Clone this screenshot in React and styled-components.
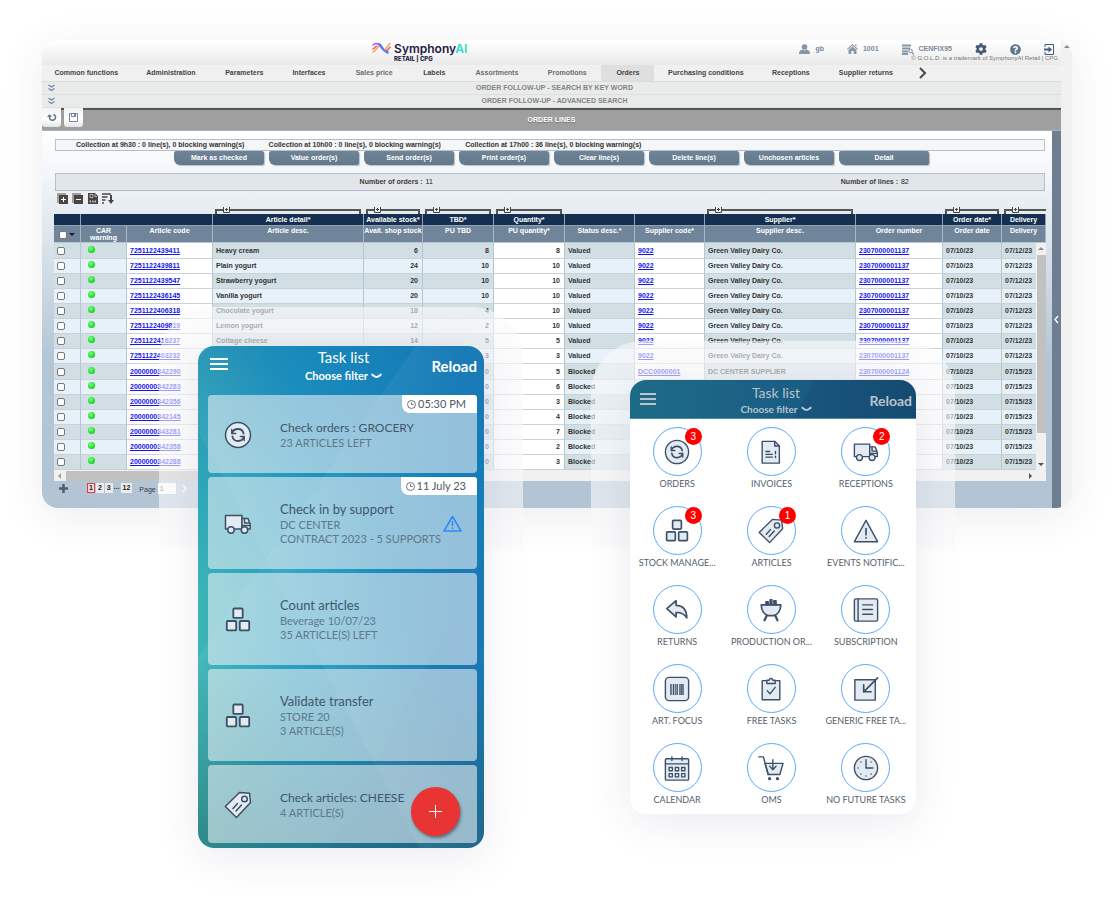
import React from 'react';
import styled, { createGlobalStyle, css } from 'styled-components';
import { FaCog, FaQuestionCircle } from 'react-icons/fa';

const GlobalStyle = createGlobalStyle`
    * {
        box-sizing: border-box;
    }
    body {
        margin: 0;
        background: #fff;
        font-family: "Liberation Sans", Arial, sans-serif;
    }
    button, input {
        font-family: inherit;
        margin: 0;
    }
`;

const Page = styled.main`
    position: relative;
    min-height: 100vh;
    padding: 40px 42px 0;
    overflow: hidden;
`;

/* ---------- back office window ---------- */

const Desktop = styled.section`
    display: flex;
    border-radius: 16px;
    overflow: hidden;
    background: #f1f1f1;
    box-shadow: 0 8px 44px rgba(50, 50, 80, 0.09);
    font-size: 7px;
    font-weight: 700;
    line-height: 8px;
    color: #3b3b3b;
`;

const Screen = styled.div`
    flex: 1;
    min-width: 0;
`;

const PageScroll = styled.div`
    flex: none;
    width: 11px;
    padding-top: 5px;
    display: flex;
    justify-content: center;
`;

const Arrow = styled.span`
    width: 0;
    height: 0;
    border: 3px solid transparent;
    ${props => props.dir === 'up' && css`border-top: 0; border-bottom-color: #8a8a8a;`}
    ${props => props.dir === 'down' && css`border-bottom: 0; border-top-color: #505050;`}
    ${props => props.dir === 'left' && css`border-left: 0; border-right-color: #a0a0a0;`}
    ${props => props.dir === 'right' && css`border-right: 0; border-left-color: #505050;`}
`;

const TopBar = styled.header`
    display: flex;
    justify-content: space-between;
    height: 25px;
    padding-left: 32%;
    background: linear-gradient(#fff 10%, #e9e9e9);
`;

const Brand = styled.div`
    display: flex;
    gap: 3px;
    padding-top: 2px;
    margin-left: 4px;
`;

const BrandName = styled.div`
    font-family: Inter, sans-serif;
    font-size: 12px;
    font-weight: 600;
    line-height: 13px;
    color: #231942;
    span {
        color: #2fdcc8;
    }
`;

const BrandLine = styled.div`
    font-family: Inter, sans-serif;
    font-size: 6px;
    font-weight: 800;
    line-height: 8px;
    color: #231942;
`;

const Account = styled.div`
    padding: 3px 3px 0 0;
    color: #7a8a9a;
`;

const AccountRow = styled.div`
    display: flex;
    align-items: center;
    justify-content: flex-end;
    gap: 23px;
    height: 12px;
    padding-right: 4px;
`;

const AccountItem = styled.span`
    display: flex;
    align-items: center;
    gap: 5px;
    svg {
        color: #8496a8;
    }
`;

const IconButton = styled.button`
    display: flex;
    align-items: center;
    justify-content: center;
    padding: 0;
    border: 0;
    background: none;
    color: ${props => props.tone || '#445a77'};
    cursor: pointer;
`;

const Copyright = styled.div`
    font-size: 6px;
    font-weight: 400;
    line-height: 7px;
    color: #777;
    text-align: right;
`;

const Menu = styled.nav`
    display: flex;
    height: 17px;
    background: #f0f0f0;
    border-bottom: 1px solid #dcdcdc;
`;

const MenuLink = styled.a`
    display: flex;
    align-items: center;
    justify-content: center;
    flex: 0 0 ${props => props.share}%;
    white-space: nowrap;
    text-decoration: none;
    color: ${props => (props.soft ? '#6d6d6d' : '#454545')};
    background: ${props => (props.active ? '#dfdfdf' : 'none')};
`;

const FoldRow = styled.div`
    display: grid;
    grid-template-columns: 1fr auto 1fr;
    align-items: center;
    height: 13px;
    padding-left: 6px;
    background: #e9ebea;
    border-bottom: 1px solid #dde0e0;
    color: #858585;
`;

const TitleBar = styled.div`
    display: grid;
    grid-template-columns: 1fr auto 1fr;
    height: 23px;
    background: #9f9f9f;
    border-top: 2px solid #555;
    border-bottom: 1px solid #a7b4bf;
    color: #fff;
`;

const TabButtons = styled.div`
    display: flex;
    gap: 3px;
    margin-top: -2px;
`;

const TabButton = styled.button`
    display: flex;
    align-items: center;
    justify-content: center;
    width: 19px;
    height: 19px;
    padding: 0;
    border: 0;
    border-radius: 0 0 3px 3px;
    background: linear-gradient(#f3f3f3, #fff 60%, #e3e3e3);
`;

const ScreenTitle = styled.h1`
    margin: 0;
    padding-top: 6px;
    font-size: 7px;
    line-height: 8px;
    text-shadow: 0 1px 1px #777;
`;

const Body = styled.div`
    display: flex;
    align-items: stretch;
`;

const Work = styled.div`
    flex: 1;
    min-width: 0;
    padding: 8px 6px 0 12px;
    background: linear-gradient(#fff, #f2f5f9 12%, #b4c6d5 60%, #b3c5d5);
`;

const SideHandle = styled.button`
    flex: none;
    width: 9px;
    padding: 0;
    border: 0;
    background: #6d7e90;
`;

const Collections = styled.div`
    display: grid;
    grid-template-columns: 193fr 197fr 580fr;
    margin: 0 1px;
    padding: 1px 0 1px 20px;
    border: 1px solid #b3c0cb;
    background: #f5f6f8;
    white-space: nowrap;
    color: #333;
`;

const Actions = styled.div`
    display: flex;
    gap: 5px;
    margin: 0 117px 0 120px;
`;

const ActionButton = styled.button`
    flex: 1;
    height: 14px;
    padding: 0;
    border: 0;
    border-radius: 2px 2px 2px 6px;
    background: linear-gradient(#6f8497, #62788c);
    box-shadow: 1px 1px 1px #b9bfc6;
    color: #fff;
    font-size: 7px;
    font-weight: 700;
    line-height: 8px;
`;

const Totals = styled.div`
    display: grid;
    grid-template-columns: 1fr 1fr;
    margin: 8px 1px 0;
    height: 18px;
    align-items: center;
    border: 1px solid #b3c0cb;
    background: #e2e6eb;
    padding-left: 30%;
`;

const Total = styled.span`
    padding-left: ${props => props.inset}px;
    b {
        font-weight: 400;
        margin-left: 1px;
        color: #222;
    }
`;

const Tools = styled.div`
    display: flex;
    gap: 3px;
    padding: 2px 0 2px 3px;
`;

const GridBox = styled.div`
    position: relative;
`;

const Grid = styled.table`
    width: 100%;
    table-layout: fixed;
    border-collapse: separate;
    border-spacing: 0;
`;

const BracketCell = styled.th`
    height: 7px;
    padding: 0 3px 0 2px;
    overflow: hidden;
`;

const Bracket = styled.div`
    height: 5px;
    border: solid #555;
    border-width: 2px 2px 0 2px;
    margin: 2px ${props => (props.open ? -6 : 0)}px 0 0;
    svg {
        display: block;
        margin: -5px 0 0 6px;
    }
`;

const GroupCell = styled.th`
    height: 12px;
    padding: 0;
    background: #152f50;
    border-right: 1px solid #93a3b5;
    border-bottom: 1px solid #93a3b5;
    color: #fff;
    white-space: nowrap;
`;

const HeadCell = styled.th`
    height: 17px;
    padding: 1px 0 0;
    vertical-align: top;
    background: #70859a;
    border-right: 1px solid #a9b7c5;
    border-bottom: 1px solid #b9c5d0;
    color: #fff;
    line-height: 7px;
    white-space: pre;
    overflow: hidden;
`;

const Row = styled.tr`
    height: 15px;
    background: #e7f1f9;
    &:nth-child(odd) {
        background: #d1dfe5;
    }
    &:first-child, &:nth-child(9) {
        height: 16px;
    }
`;

const Cell = styled.td`
    padding: 0 4px 0 3px;
    border-right: 1px solid #b4c5d4;
    border-bottom: 1px solid #cbd1d7;
    text-align: ${props => (props.right ? 'right' : 'left')};
    white-space: nowrap;
    color: #333;
    background: ${props => (props.entry ? '#fff' : 'none')};
`;

const CellLink = styled.a`
    color: #1414ee;
`;

const Tick = styled.input`
    appearance: none;
    display: block;
    width: 8px;
    height: 8px;
    border: 1px solid #777;
    border-radius: 2px;
    background: #fff;
`;

const HeadTick = styled.div`
    display: flex;
    align-items: center;
    gap: 2px;
    padding: 4px 0 0 5px;
`;

const Lamp = styled.span`
    display: block;
    width: 7px;
    height: 7px;
    margin: -3px 0 0 4px;
    border-radius: 50%;
    background: radial-gradient(circle at 40% 35%, #7dff7d, #1fdc2b 60%, #17a81f);
`;

const RowScroll = styled.div`
    position: absolute;
    right: 0;
    top: 36px;
    bottom: 0;
    width: 10px;
    display: flex;
    flex-direction: column;
    align-items: center;
    justify-content: space-between;
    padding: 4px 0;
    background: #f1f1f1;
    &::before {
        content: "";
        position: absolute;
        top: 12px;
        bottom: 37px;
        width: 9px;
        background: #c1c1c1;
    }
`;

const ColumnScroll = styled.div`
    display: flex;
    align-items: center;
    justify-content: space-between;
    height: 11px;
    padding: 0 14px 0 4px;
    background: #f1f1f1;
`;

const Thumb = styled.div`
    width: 40%;
    height: 10px;
    margin: 0 auto 0 5px;
    background: #c1c1c1;
`;

const Pager = styled.footer`
    display: flex;
    align-items: flex-start;
    height: 27px;
    padding: 2px 0 0 5px;
    svg {
        margin-top: 1px;
    }
`;

const PageNumbers = styled.div`
    display: flex;
    gap: 1px;
    margin: 0 7px 0 19px;
`;

const PageButton = styled.button`
    height: 10px;
    padding: 0 1px;
    border: 1px solid ${props => (props.current ? '#e23b43' : '#ececec')};
    background: ${props => (props.current ? '#f8d7d9' : '#ececec')};
    font-size: 7px;
    line-height: 8px;
    font-weight: 700;
    color: #222;
`;

const PageField = styled.label`
    display: flex;
    align-items: flex-start;
    gap: 2px;
    font-weight: 400;
    line-height: 14px;
    input {
        width: 18px;
        height: 11px;
        padding: 0 2px;
        border: 0;
        background: #fff;
        font-size: 7px;
        color: #333;
    }
`;

/* ---------- phones ---------- */

const PhoneSlot = styled.div`
    position: absolute;
    left: ${props => props.x}px;
    top: ${props => props.y}px;
    width: 286px;
    font-family: Lato, sans-serif;
    &::before {
        content: "";
        position: absolute;
        left: -39px;
        right: -39px;
        top: -39px;
        height: ${props => props.halo}px;
        border-radius: 52px 52px 0 0;
        background: rgba(250, 250, 252, 0.6);
    }
`;

const Phone = styled.section`
    position: relative;
    border-radius: 16px;
    overflow: hidden;
    box-shadow: 0 8px 44px rgba(60, 60, 110, 0.1);
    background: #fff;
`;

const TaskPhone = styled(Phone)`
    padding: 0 7px 5px 10px;
    background:
        linear-gradient(118deg, transparent 72%, rgba(10, 60, 130, 0.06) 72.2%, transparent 90%),
        linear-gradient(62deg, transparent 40%, rgba(255, 255, 255, 0.06) 40.2%, transparent 60%),
        linear-gradient(125deg, transparent 34%, rgba(255, 255, 255, 0.05) 34.2%, transparent 55%),
        linear-gradient(rgba(14, 115, 180, 0.5), rgba(10, 130, 190, 0.25) 30%, transparent 50%, transparent 62%, rgba(30, 70, 70, 0.4)),
        linear-gradient(to right, #3cb5b6, #249fc2 35%, #1a7bb6 90%);
`;

const PhoneHead = styled.header`
    display: grid;
    grid-template-columns: 1fr auto 1fr;
    align-items: center;
    color: ${props => (props.dim ? '#b9c3cd' : '#fff')};
    height: ${props => (props.dim ? 39 : 49)}px;
    ${props => props.dim ? css`
        padding: 3px 4px 0 10px;
        background:
            linear-gradient(120deg, transparent 60%, rgba(10, 40, 90, 0.12) 60.5%),
            linear-gradient(to right, #1d6b87, #1b5f85 50%, #174f76);
        border-bottom: 1px solid #4f8ba0;
    ` : css`
        padding: 0 0 9px 2px;
    `}
`;

const Burger = styled.button`
    display: block;
    width: ${props => (props.small ? 16 : 18)}px;
    height: 12px;
    padding: 0;
    border: 0;
    margin-top: -4px;
    background: linear-gradient(currentColor 2px, transparent 2px 5px, currentColor 5px 7px, transparent 7px 10px, currentColor 10px);
    color: inherit;
`;

const HeadTitle = styled.h2`
    margin: 0;
    font-size: ${props => (props.small ? 14 : 15)}px;
    font-weight: 400;
    line-height: ${props => (props.small ? 17 : 19)}px;
    text-align: center;
`;

const Filter = styled.button`
    display: flex;
    align-items: center;
    gap: 3px;
    padding: 0;
    border: 0;
    background: none;
    color: inherit;
    font-size: ${props => (props.small ? 10 : 11)}px;
    font-weight: 700;
    line-height: 17px;
`;

const Reload = styled.button`
    justify-self: end;
    padding: 0;
    border: 0;
    background: none;
    color: inherit;
    font-size: ${props => (props.small ? 14 : 15)}px;
    font-weight: 700;
`;

const Tasks = styled.div`
    display: grid;
    gap: 4px;
`;

const Task = styled.article`
    position: relative;
    display: grid;
    grid-template-columns: 56px 1fr auto;
    align-items: center;
    height: ${props => (props.tall ? 92 : 78)}px;
    padding: 1px 15px 0 16px;
    border-radius: 4px;
    background: rgba(232, 238, 243, 0.6);
    color: #61788a;
    font-size: 11px;
    line-height: 14px;
    h3 {
        margin: 0;
        color: #41566d;
        font-size: ${props => (props.compact ? 12 : 13)}px;
        font-weight: 400;
        line-height: 17px;
    }
    p {
        margin: 0;
        white-space: nowrap;
    }
`;

const Due = styled.span`
    position: absolute;
    top: 0;
    right: 0;
    display: flex;
    align-items: center;
    gap: 2px;
    height: 18px;
    padding: 0 11px 0 5px;
    border-radius: 0 3px 0 8px;
    background: #fff;
    color: #4c5866;
    font-size: 11px;
`;

const AddButton = styled.button`
    position: absolute;
    right: 24px;
    bottom: 12px;
    display: flex;
    align-items: center;
    justify-content: center;
    width: 49px;
    height: 49px;
    border: 0;
    border-radius: 50%;
    background: #e93434;
    box-shadow: 1px 2px 3px rgba(30, 40, 60, 0.5);
`;

const Apps = styled.div`
    display: grid;
    grid-template-columns: repeat(3, 1fr);
    gap: 14px 0;
    padding: 8px 3px 6px 0;
`;

const AppLink = styled.a`
    display: flex;
    flex-direction: column;
    align-items: center;
    text-decoration: none;
    color: #55606c;
    font-size: 9px;
    line-height: 16px;
    white-space: nowrap;
`;

const Disc = styled.span`
    position: relative;
    display: flex;
    align-items: center;
    justify-content: center;
    width: 49px;
    height: 49px;
    border: 1px solid #5ba8fb;
    border-radius: 50%;
`;

const Badge = styled.span`
    position: absolute;
    top: 0;
    right: -1px;
    width: 17px;
    height: 17px;
    border-radius: 50%;
    background: #f00;
    color: #fff;
    font-family: "Liberation Sans", Arial, sans-serif;
    font-size: 10px;
    line-height: 17px;
    text-align: center;
`;

const Glyph = styled.svg.attrs({ viewBox: '0 0 28 28' })`
    width: ${props => props.width || 26}px;
    height: ${props => props.width || 26}px;
    fill: #e3eaf1;
    stroke: #3c5068;
    stroke-width: 1.5;
    stroke-linejoin: round;
    stroke-linecap: round;
`;

const glyphs = {
    orders: (
        <>
            <circle cx="14" cy="14" r="12.500" />
            <path fill="none" strokeWidth="1.800" d="M8.200 12.200C8.800 9.600 11 8 14 8c2.800 0 5 1.600 5.600 4.600M19.800 15.800C19.200 18.400 17 20 14 20c-2.800 0-5-1.600-5.600-4.600" />
            <path fill="none" d="M7.800 8.500v3.900h3.900M20.200 19.500v-3.900h-3.900" />
        </>
    ),
    truck: (
        <>
            <path d="M1.500 5.500h16.500v13.500H1.500z" />
            <path d="M18 8.500h6l2.200 6V19H18z" />
            <path fill="none" d="M20.500 8.500v4.500h5M18 15.500h8" />
            <circle cx="7" cy="20" r="3.200" />
            <circle cx="20.500" cy="20" r="3.200" />
        </>
    ),
    boxes: (
        <>
            <rect x="9.300" y="2.500" width="9.400" height="9.400" rx="1" strokeWidth="1.800" />
            <rect x="2.800" y="15" width="9.400" height="9.400" rx="1" strokeWidth="1.800" />
            <rect x="15.800" y="15" width="9.400" height="9.400" rx="1" strokeWidth="1.800" />
        </>
    ),
    tag: (
        <>
            <path d="M15.500 1.500l10 .8 1 9.200L12.500 26.500 1.300 15.500z" />
            <circle cx="20.500" cy="8" r="2.800" />
            <path fill="none" d="M9 17.500l4.500-5M12 20l5.500-6" />
        </>
    ),
    invoice: (
        <>
            <path d="M4.500 2.500h13.500l5 5v18.500h-18.500z" />
            <path fill="none" d="M18 2.500v5h5M8.500 13.500h4M8.500 16.500h7M8.500 19.500h7M18.800 13.500v2.500M18.800 18.500v1.500" />
        </>
    ),
    alert: (
        <>
            <path d="M14 2.500l12.500 23h-25z" />
            <path fill="none" strokeWidth="1.800" d="M14 11.500v6.500M14 21.200v.3" />
        </>
    ),
    back: (
        <path strokeWidth="1.800" d="M3 12.500l10-8.500v5c6.500.2 11.500 4 11.500 13.500-2.800-4.500-6-6-11.500-5.800V21.500z" />
    ),
    grill: (
        <>
            <path strokeWidth="1.800" d="M3.500 8.500h21c0 6-3.500 11-7.500 11.500h-6C7 19.500 3.500 14.500 3.500 8.500z" />
            <path fill="#3c5068" d="M8.500 5v3.500h2.500V5zM13 3v5.500h2V3zM17 4v4.500h2.500V4z" />
            <path fill="none" strokeWidth="2.400" d="M9.500 20L7 25M18.500 20l2.500 5" />
        </>
    ),
    book: (
        <>
            <rect x="1.500" y="2" width="25" height="24" rx="1.500" />
            <path fill="none" d="M5.500 2v24M10.500 8.500h10.500M10.500 13.500h10.500M10.500 18.500h10.500" />
        </>
    ),
    barcode: (
        <>
            <rect x="1.500" y="1.500" width="25" height="25" rx="4" />
            <path fill="none" strokeLinecap="butt" d="M7.500 8.500v12M10.200 8.500v12M14.200 8.500v12M17.200 8.500v12M20.500 8.500v12" />
            <path fill="none" strokeWidth="1" strokeLinecap="butt" d="M12.200 8.500v12M18.900 8.500v12" />
        </>
    ),
    clipboard: (
        <>
            <path d="M4.500 5h19v20.500h-19z" />
            <path d="M9.500 8V4.500h2.500c.5-2.500 3.500-2.500 4 0h2.500V8z" />
            <path fill="none" d="M10 16l3 3.200 5.500-7" />
        </>
    ),
    inbox: (
        <>
            <path d="M2 4h22v22H2z" />
            <path fill="none" strokeWidth="1.800" d="M26.500 2L11.500 17M11.500 9.500V17h8" />
        </>
    ),
    calendar: (
        <>
            <rect x="1.500" y="4" width="25" height="23" rx="1" />
            <path fill="none" d="M1.500 9.500h25M8.500 2v4M19.500 2v4" />
            <path fill="#fff" d="M5.500 13.500h3.500v3.500H5.500zM12.200 13.500h3.500v3.500h-3.500zM19 13.500h3.500v3.500H19zM5.500 20h3.500v3.500H5.500zM12.200 20h3.500v3.500h-3.500zM19 20h3.500v3.500H19z" />
        </>
    ),
    cart: (
        <>
            <path d="M7.500 9h19.500l-3.500 12H11z" />
            <path fill="none" d="M.8 2h5L11 21M16 5v10.500M12.500 12l3.500 3.800 3.500-3.800" />
            <circle cx="12.500" cy="25.500" r="1" fill="#3c5068" />
            <circle cx="21" cy="25.500" r="1" fill="#3c5068" />
        </>
    ),
    clock: (
        <>
            <circle cx="14" cy="14" r="12.500" />
            <path fill="none" d="M14 5v9h7.500M8.500 7.500v.1M5.500 14h.1M8.500 20.500v.1M14 22.500v.1M19.500 20.500v.1M19.500 7.500v.1" />
        </>
    ),
};

const menu = [
    { name: 'Common functions', share: 8.7 },
    { name: 'Administration', share: 7.9 },
    { name: 'Parameters', share: 6.5 },
    { name: 'Interfaces', share: 6.2 },
    { name: 'Sales price', share: 6.6, soft: true },
    { name: 'Labels', share: 5.2 },
    { name: 'Assortments', share: 7.1, soft: true },
    { name: 'Promotions', share: 6.7, soft: true },
    { name: 'Orders', share: 5.2, active: true },
    { name: 'Purchasing conditions', share: 10.1 },
    { name: 'Receptions', share: 6.6 },
    { name: 'Supplier returns', share: 8.1 },
];

const actions = ['Mark as checked', 'Value order(s)', 'Send order(s)', 'Print order(s)', 'Clear line(s)', 'Delete line(s)', 'Unchosen articles', 'Detail'];

const columns = [
    { width: 27 },
    { width: 46, head: 'CAR\nwarning' },
    { width: 86, head: 'Article code' },
    { width: 151, group: 'Article detail*', head: 'Article desc.' },
    { width: 59, group: 'Available stock*', head: 'Avail. shop stock' },
    { width: 71, group: 'TBD*', head: 'PU TBD' },
    { width: 71, group: 'Quantity*', head: 'PU quantity*' },
    { width: 70, head: 'Status desc.*' },
    { width: 70, head: 'Supplier code*' },
    { width: 151, group: 'Supplier*', head: 'Supplier desc.' },
    { width: 87, head: 'Order number' },
    { width: 59, group: 'Order date*', head: 'Order date' },
    { width: 44, group: 'Delivery', head: 'Delivery' },
];

const dairy = ['9022', 'Green Valley Dairy Co.', '2307000001137'];

const lines = [
    ['7251122439411', 'Heavy cream', 6, 8, 8, ...dairy],
    ['7251122439811', 'Plain yogurt', 24, 10, 10, ...dairy],
    ['7251122439547', 'Strawberry yogurt', 20, 10, 10, ...dairy],
    ['7251122436145', 'Vanilla yogurt', 20, 10, 10, ...dairy],
    ['7251122406318', 'Chocolate yogurt', 18, 4, 10, ...dairy],
    ['7251122409819', 'Lemon yogurt', 12, 2, 10, ...dairy],
    ['7251122416237', 'Cottage cheese', 14, 5, 5, ...dairy],
    ['7251122403232', '', '', 3, 3, ...dairy],
    ['2000000342290', '', '', 0, 5, 'DCC0000001', 'DC CENTER SUPPLIER', '2307000001124'],
    ['2000000342283', '', '', 0, 6],
    ['2000000342356', '', '', 0, 3],
    ['2000000342145', '', '', 0, 4],
    ['2000000343281', '', '', 0, 7],
    ['2000000342358', '', '', 0, 2],
    ['2000000342288', '', '', 0, 3],
];

const tasks = [
    { icon: 'orders', title: 'Check orders : GROCERY', info: ['23 ARTICLES LEFT'], due: '05:30 PM' },
    { icon: 'truck', title: 'Check in by support', info: ['DC CENTER', 'CONTRACT 2023 - 5 SUPPORTS'], due: '11 July 23', warning: true },
    { icon: 'boxes', title: 'Count articles', info: ['Beverage 10/07/23', '35 ARTICLE(S) LEFT'] },
    { icon: 'boxes', title: 'Validate transfer', info: ['STORE 20', '3 ARTICLE(S)'] },
    { icon: 'tag', title: 'Check articles: CHEESE', info: ['4 ARTICLE(S)'] },
];

const apps = [
    { icon: 'orders', name: 'ORDERS', count: 3 },
    { icon: 'invoice', name: 'INVOICES' },
    { icon: 'truck', name: 'RECEPTIONS', count: 2 },
    { icon: 'boxes', name: 'STOCK MANAGE...', count: 3 },
    { icon: 'tag', name: 'ARTICLES', count: 1 },
    { icon: 'alert', name: 'EVENTS NOTIFIC...' },
    { icon: 'back', name: 'RETURNS' },
    { icon: 'grill', name: 'PRODUCTION OR...' },
    { icon: 'book', name: 'SUBSCRIPTION' },
    { icon: 'barcode', name: 'ART. FOCUS' },
    { icon: 'clipboard', name: 'FREE TASKS' },
    { icon: 'inbox', name: 'GENERIC FREE TA...' },
    { icon: 'calendar', name: 'CALENDAR' },
    { icon: 'cart', name: 'OMS' },
    { icon: 'clock', name: 'NO FUTURE TASKS' },
];

function Logo() {
    return (
        <svg width="19" height="12" viewBox="0 0 19 12" fill="none" strokeWidth="1.500" strokeLinecap="round">
            <path stroke="#f9a13a" d="M1 10C3.500 9 4.500 6.500 6.500 4.500M12.500 8c2-1.500 3-4.500 5.500-6.500" />
            <path stroke="#f25f7a" d="M1 7c1.500-.5 2.500-2 3.500-3M14.500 8.500c1.500-.5 2.500-2 3.500-3.500" />
            <path stroke="#8b5cf6" d="M1 3C4 .5 6 1.500 8 4s4 6.500 8 5.500" />
            <path stroke="#4285f4" d="M6.500 1.500c4 .5 4.500 8.500 9.500 9.500" />
        </svg>
    );
}

function DoubleChevron() {
    return (
        <svg width="7" height="8" viewBox="0 0 7 8" fill="none" stroke="#7288a0" strokeWidth="1.300">
            <path d="M.5 1l3 2 3-2M.5 4.500l3 2 3-2" />
        </svg>
    );
}

function FilterChevron() {
    return (
        <svg width="11" height="6" viewBox="0 0 11 6" fill="none" stroke="currentColor" strokeWidth="2.200">
            <path d="M.5 1.500c1.500 0 2.500 2.500 5 2.500s3.500-2.500 5-2.500" />
        </svg>
    );
}

function ToolIcons() {
    return (
        <Tools>
            <IconButton aria-label="Add lines" tone="#4a4444">
                <svg width="12" height="12" viewBox="0 0 12 12">
                    <path d="M0 0h9v2H2v8H0z" fill="#a59f9d" />
                    <path d="M2 2h9v9H2z" fill="currentColor" />
                    <path d="M6.500 4v5M4 6.500h5" stroke="#fff" />
                </svg>
            </IconButton>
            <IconButton aria-label="Remove lines" tone="#4a4444">
                <svg width="12" height="12" viewBox="0 0 12 12">
                    <path d="M0 0h9v2H2v8H0z" fill="#a59f9d" />
                    <path d="M2 2h9v9H2z" fill="currentColor" />
                    <path d="M4 6.500h5" stroke="#fff" />
                </svg>
            </IconButton>
            <IconButton aria-label="Export" tone="#4a4444">
                <svg width="12" height="12" viewBox="0 0 12 12">
                    <path d="M1 0h7l3 3v8H1z" fill="currentColor" />
                    <path d="M3 1.500h3v3H3zM8 1v2.500h2" stroke="#ccc" strokeWidth=".8" fill="none" />
                    <path d="M2.500 8.500h7" stroke="#bbb" strokeWidth="2" strokeDasharray="1.500 1" />
                </svg>
            </IconButton>
            <IconButton aria-label="Sort" tone="#4a4444">
                <svg width="12" height="12" viewBox="0 0 12 12" fill="none" stroke="currentColor" strokeWidth="1.500">
                    <path d="M0 1h9M0 4h5.500M0 7h3.500M0 10h2" />
                    <path d="M9 2v7" strokeWidth="2" />
                    <path d="M6 7h6L9 11z" fill="currentColor" stroke="none" />
                </svg>
            </IconButton>
        </Tools>
    );
}

function OrderGrid() {
    return (
        <GridBox>
            <Grid>
                <colgroup>
                    {columns.map((col, i) => <col key={i} style={{ width: `${col.width / 9.92}%` }} />)}
                </colgroup>
                <thead>
                    <tr>
                        {columns.map((col, i) => (
                            <BracketCell key={i}>
                                {col.group && (
                                    <Bracket open={i === columns.length - 1 ? 1 : 0}>
                                        <svg width="7" height="7" viewBox="0 0 7 7" fill="#eee" stroke="#444">
                                            <path d="M.5 .5h6v6h-6zM3.500 2v3M2 3.500h3" />
                                        </svg>
                                    </Bracket>
                                )}
                            </BracketCell>
                        ))}
                    </tr>
                    <tr>
                        {columns.map((col, i) => i !== 1 && (
                            <GroupCell key={i} colSpan={i === 2 ? 2 : 1}>{col.group}</GroupCell>
                        ))}
                    </tr>
                    <tr>
                        {columns.map((col, i) => (
                            <HeadCell key={i}>
                                {i === 0 ? (
                                    <HeadTick>
                                        <Tick type="checkbox" aria-label="Select all lines" />
                                        <svg width="6" height="4" viewBox="0 0 6 4"><path d="M0 0h6L3 3z" fill="#1c1440" /></svg>
                                    </HeadTick>
                                ) : col.head}
                            </HeadCell>
                        ))}
                    </tr>
                </thead>
                <tbody>
                    {lines.map(([code, desc, stock, tbd, qty, supplier, supplierName, order], i) => (
                        <Row key={code}>
                            <Cell><Tick type="checkbox" aria-label={code} /></Cell>
                            <Cell><Lamp /></Cell>
                            <Cell entry={1}><CellLink href="#article">{code}</CellLink></Cell>
                            <Cell>{desc}</Cell>
                            <Cell right={1}>{stock}</Cell>
                            <Cell right={1}>{tbd}</Cell>
                            <Cell right={1} entry={1}>{qty}</Cell>
                            <Cell>{i < 8 ? 'Valued' : 'Blocked'}</Cell>
                            <Cell entry={1}>{supplier && <CellLink href="#supplier">{supplier}</CellLink>}</Cell>
                            <Cell>{supplierName}</Cell>
                            <Cell entry={1}>{order && <CellLink href="#order">{order}</CellLink>}</Cell>
                            <Cell>07/10/23</Cell>
                            <Cell>{i < 8 ? '07/12/23' : '07/15/23'}</Cell>
                        </Row>
                    ))}
                </tbody>
            </Grid>
            <RowScroll>
                <Arrow dir="up" />
                <Arrow dir="down" />
            </RowScroll>
        </GridBox>
    );
}

function BackOffice() {
    return (
        <Desktop>
            <Screen>
                <TopBar>
                    <Brand>
                        <Logo />
                        <div>
                            <BrandName>Symphony<span>AI</span></BrandName>
                            <BrandLine>RETAIL | CPG</BrandLine>
                        </div>
                    </Brand>
                    <Account>
                        <AccountRow>
                            <AccountItem>
                                <svg width="11" height="10" viewBox="0 0 11 10" fill="currentColor">
                                    <circle cx="5.500" cy="3" r="2.800" />
                                    <path d="M0 10c0-3 1.500-4 3.500-4.500l2 1 2-1C9.500 6 11 7 11 10z" />
                                </svg>
                                gb
                            </AccountItem>
                            <AccountItem>
                                <svg width="11" height="10" viewBox="0 0 11 10" fill="currentColor">
                                    <path d="M5.500 0L11 5l-.7.800L5.500 1.600.7 5.800 0 5zM8 .5h1.500v2L8 1.200z" />
                                    <path d="M5.500 2.500l4 3.500v4H6.800V7H4.200v3H1.500V6z" />
                                </svg>
                                1001
                            </AccountItem>
                            <AccountItem>
                                <svg width="12" height="11" viewBox="0 0 12 11" fill="none" stroke="currentColor" strokeWidth="1.800">
                                    <path d="M0 1.500h9M0 4.500h8M0 7.500h6M0 10h6" />
                                    <circle cx="8.500" cy="7" r="1.800" strokeWidth="1" />
                                    <path d="M10 8.500l2 2" strokeWidth="1.300" />
                                </svg>
                                CENFIX95
                            </AccountItem>
                            <IconButton aria-label="Settings"><FaCog size="12" /></IconButton>
                            <IconButton aria-label="Help" tone="#5f7388"><FaQuestionCircle size="11" /></IconButton>
                            <IconButton aria-label="Sign out">
                                <svg width="10" height="11" viewBox="0 0 10 11" fill="none" stroke="currentColor">
                                    <path d="M1 3V.5h8.500v10H1V8" />
                                    <path d="M0 5.500h5" strokeWidth="2" />
                                    <path d="M4.500 2.500l3.500 3-3.500 3z" fill="currentColor" stroke="none" />
                                </svg>
                            </IconButton>
                        </AccountRow>
                        <Copyright>© G.O.L.D. is a trademark of SymphonyAI Retail | CPG</Copyright>
                    </Account>
                </TopBar>
                <Menu>
                    {menu.map(item => (
                        <MenuLink key={item.name} href="#menu" share={item.share} soft={item.soft ? 1 : 0} active={item.active ? 1 : 0}>{item.name}</MenuLink>
                    ))}
                    <IconButton aria-label="More menus" tone="#4a4a4a">
                        <svg width="40" height="12" viewBox="0 0 40 12" fill="none" stroke="currentColor" strokeWidth="2">
                            <path d="M13 1l5 5-5 5" />
                        </svg>
                    </IconButton>
                </Menu>
                <FoldRow><DoubleChevron />ORDER FOLLOW-UP - SEARCH BY KEY WORD</FoldRow>
                <FoldRow><DoubleChevron />ORDER FOLLOW-UP - ADVANCED SEARCH</FoldRow>
                <TitleBar>
                    <TabButtons>
                        <TabButton aria-label="Undo">
                            <svg width="10" height="9" viewBox="0 0 10 9" fill="none" stroke="#64788f" strokeWidth="1.500">
                                <path d="M2.500 2.500v2a3 3 0 1 0 4-3" />
                                <path d="M0 4l2.500-3L5 4z" fill="#64788f" stroke="none" />
                            </svg>
                        </TabButton>
                        <TabButton aria-label="Save">
                            <svg width="9" height="9" viewBox="0 0 9 9" fill="none" stroke="#7288a0">
                                <path d="M.5 .5h8v8h-8zM2.500 .5v3h4v-3M5.500 1v2" />
                            </svg>
                        </TabButton>
                    </TabButtons>
                    <ScreenTitle>ORDER LINES</ScreenTitle>
                </TitleBar>
                <Body>
                    <Work>
                        <Collections>
                            <span>Collection at 9h30 : 0 line(s), 0 blocking warning(s)</span>
                            <span>Collection at 10h00 : 0 line(s), 0 blocking warning(s)</span>
                            <span>Collection at 17h00 : 36 line(s), 0 blocking warning(s)</span>
                        </Collections>
                        <Actions>
                            {actions.map(name => <ActionButton key={name}>{name}</ActionButton>)}
                        </Actions>
                        <Totals>
                            <Total inset={6}>Number of orders : <b>11</b></Total>
                            <Total inset={142}>Number of lines : <b>82</b></Total>
                        </Totals>
                        <ToolIcons />
                        <OrderGrid />
                        <ColumnScroll>
                            <Arrow dir="left" />
                            <Thumb />
                            <Arrow dir="right" />
                        </ColumnScroll>
                        <Pager>
                            <IconButton aria-label="Add line" tone="#4d5f70">
                                <svg width="9" height="9" viewBox="0 0 9 9" stroke="currentColor" strokeWidth="2.500">
                                    <path d="M4.500 0v9M0 4.500h9" />
                                </svg>
                            </IconButton>
                            <PageNumbers>
                                <PageButton current={1}>1</PageButton>
                                <PageButton>2</PageButton>
                                <PageButton>3</PageButton>
                                <span>...</span>
                                <PageButton>12</PageButton>
                            </PageNumbers>
                            <PageField>Page <input defaultValue="1" /></PageField>
                            <IconButton aria-label="Next page" tone="#fff">
                                <svg width="16" height="9" viewBox="0 0 16 9" fill="none" stroke="currentColor" strokeWidth="1.500">
                                    <path d="M7 1l3 3.500L7 8" />
                                </svg>
                            </IconButton>
                        </Pager>
                    </Work>
                    <SideHandle aria-label="Open side panel">
                        <svg width="5" height="9" viewBox="0 0 5 9" fill="none" stroke="#fff" strokeWidth="1.300">
                            <path d="M4 1L1 4.500 4 8" />
                        </svg>
                    </SideHandle>
                </Body>
            </Screen>
            <PageScroll><Arrow dir="up" /></PageScroll>
        </Desktop>
    );
}

function PhoneHeader({ small }) {
    const flag = small ? 1 : 0;
    return (
        <PhoneHead dim={flag}>
            <Burger small={flag} aria-label="Menu" />
            <div>
                <HeadTitle small={flag}>Task list</HeadTitle>
                <Filter small={flag}>Choose filter <FilterChevron /></Filter>
            </div>
            <Reload small={flag}>Reload</Reload>
        </PhoneHead>
    );
}

function App() {
    return (
        <>
            <GlobalStyle />
            <Page>
                <BackOffice />
                <PhoneSlot x={198} y={346} halo={240}>
                    <TaskPhone>
                        <PhoneHeader />
                        <Tasks>
                            {tasks.map(task => (
                                <Task key={task.title} tall={task.info.length > 1 ? 1 : 0} compact={task.title.length > 20 ? 1 : 0}>
                                    <Glyph width="28">{glyphs[task.icon]}</Glyph>
                                    <div>
                                        <h3>{task.title}</h3>
                                        {task.info.map(line => <p key={line}>{line}</p>)}
                                    </div>
                                    {task.warning && (
                                        <svg width="19" height="18" viewBox="0 0 19 18" fill="none" stroke="#2b8af5" strokeWidth="1.500" strokeLinejoin="round">
                                            <path d="M9.500 1.500L18 16H1zM9.500 6v5M9.500 12.500v1.500" />
                                        </svg>
                                    )}
                                    {task.due && (
                                        <Due>
                                            <svg width="9" height="9" viewBox="0 0 9 9" fill="none" stroke="currentColor" strokeWidth=".8">
                                                <circle cx="4.500" cy="4.500" r="4" />
                                                <path d="M4.500 2v2.500h2.200" />
                                            </svg>
                                            {task.due}
                                        </Due>
                                    )}
                                </Task>
                            ))}
                        </Tasks>
                        <AddButton aria-label="Add task">
                            <svg width="13" height="13" viewBox="0 0 13 13" stroke="#fff"><path d="M6.500 0v13M0 6.500h13" /></svg>
                        </AddButton>
                    </TaskPhone>
                </PhoneSlot>
                <PhoneSlot x={630} y={380} halo={206}>
                    <Phone>
                        <PhoneHeader small />
                        <Apps>
                            {apps.map(app => (
                                <AppLink key={app.name} href="#app">
                                    <Disc>
                                        <Glyph>{glyphs[app.icon]}</Glyph>
                                        {app.count && <Badge>{app.count}</Badge>}
                                    </Disc>
                                    {app.name}
                                </AppLink>
                            ))}
                        </Apps>
                    </Phone>
                </PhoneSlot>
            </Page>
        </>
    );
}

export default App;
